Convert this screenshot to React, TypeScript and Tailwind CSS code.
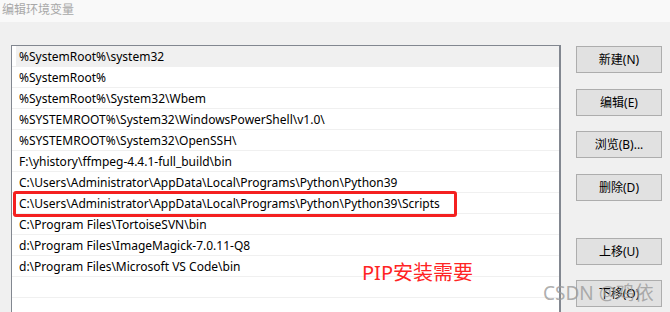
import React from 'react';

const paths = [
  '%SystemRoot%\\system32',
  '%SystemRoot%',
  '%SystemRoot%\\System32\\Wbem',
  '%SYSTEMROOT%\\System32\\WindowsPowerShell\\v1.0\\',
  '%SYSTEMROOT%\\System32\\OpenSSH\\',
  'F:\\yhistory\\ffmpeg-4.4.1-full_build\\bin',
  'C:\\Users\\Administrator\\AppData\\Local\\Programs\\Python\\Python39',
  'C:\\Users\\Administrator\\AppData\\Local\\Programs\\Python\\Python39\\Scripts',
  'C:\\Program Files\\TortoiseSVN\\bin',
  'd:\\Program Files\\ImageMagick-7.0.11-Q8',
  'd:\\Program Files\\Microsoft VS Code\\bin',
  '',
  '',
];

const font = { fontFamily: '"Noto Sans", "Noto Sans CJK SC", sans-serif' };

const Btn: React.FC<{ label: string; className?: string }> = ({ label, className = '' }) => (
  <button
    className={`w-[86px] h-[27px] bg-[#e1e1e1] border border-[#adadad] text-[12px] text-black leading-none ${className}`}
  >
    {label}
  </button>
);

export default function App() {
  return (
    <div className="w-[670px] h-[312px] bg-[#f0f0f0] relative overflow-hidden" style={font}>
      {/* title */}
      <div className="h-[22px] bg-[#f9f9f9] pl-[2px] text-[12px] leading-[20px] text-[#a8a8a8]">
        编辑环境变量
      </div>

      <div className="flex pl-[11px] pt-[23px]">
        {/* list */}
        <div className="w-[550px] h-[280px] border border-[#828790] border-r-2 bg-white">
          {paths.map((p, i) => (
            <div key={i} className="relative h-[21px] border-b border-[#f0f0f0]">
              {i === 0 ? (
                <div className="ml-[4px] h-full bg-[#f0f0f0] pl-[3px] pt-[1px] text-[12px] leading-[20px] text-black">{p}</div>
              ) : (
                <div className="pl-[7px] pt-[1px] text-[12px] leading-[20px] text-black">{p}</div>
              )}
              {i === 7 && (
                <div className="absolute left-[1px] top-[-2px] w-[444px] h-[26px] border-[3px] border-[#f42020] rounded-[3px]" />
              )}
            </div>
          ))}
        </div>

        {/* buttons */}
        <div className="flex flex-col ml-[15px] pt-[1px]">
          <Btn label="新建(N)" />
          <Btn label="编辑(E)" className="mt-[16px]" />
          <Btn label="浏览(B)..." className="mt-[15px]" />
          <Btn label="删除(D)" className="mt-[16px]" />
          <Btn label="上移(U)" className="mt-[37px]" />
          <Btn label="下移(O)" className="mt-[15px]" />
        </div>
      </div>

      {/* annotation */}
      <div className="absolute left-[362px] top-[260px] text-[20px] leading-[26px] text-[#ff2424]">
        PIP安装需要
      </div>

      {/* watermark */}
      <div className="absolute left-[543px] top-[281px] text-[19px] leading-[24px] text-[#9a9a9a]/80">
        CSDN @鸡依
      </div>
    </div>
  );
}
